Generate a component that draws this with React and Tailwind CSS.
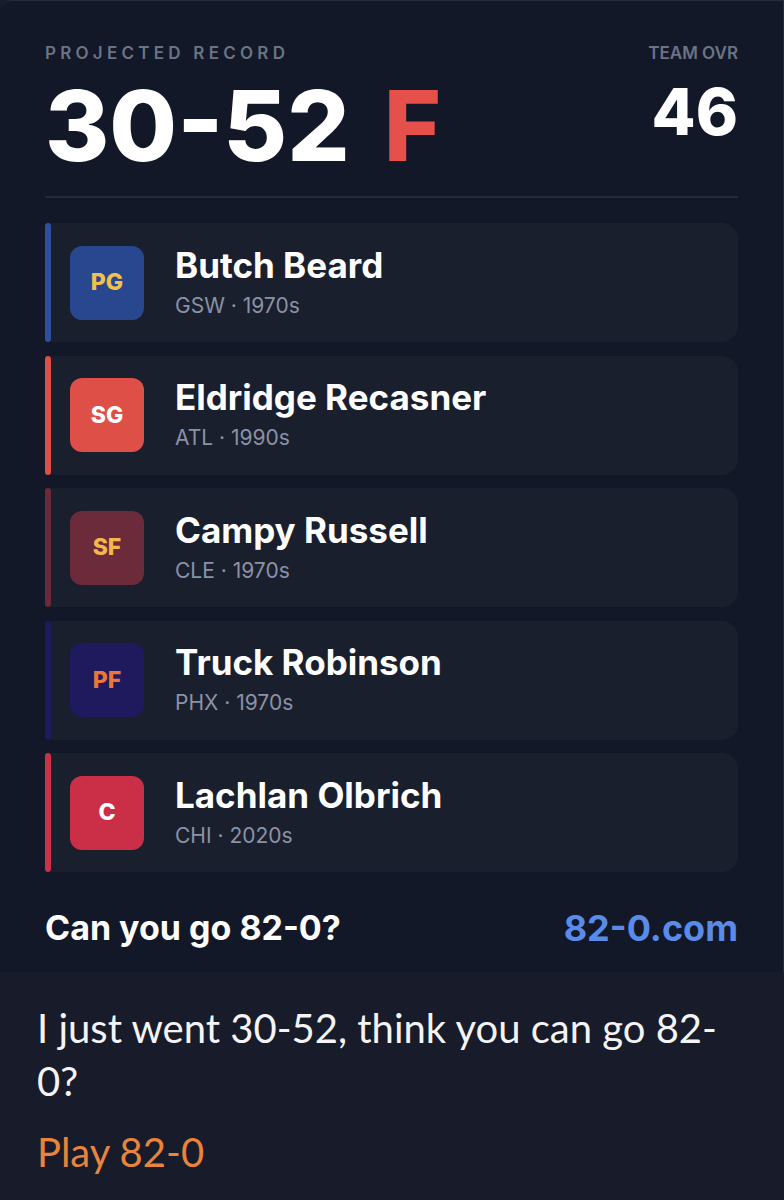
import React from 'react';

const players = [
  { pos: 'PG', name: 'Butch Beard', team: 'GSW', era: '1970s', bar: 'bg-[#2f4f9e]', badge: 'bg-[#28478f]', text: 'text-[#f2c04c]' },
  { pos: 'SG', name: 'Eldridge Recasner', team: 'ATL', era: '1990s', bar: 'bg-[#df4e47]', badge: 'bg-[#de4f48]', text: 'text-white' },
  { pos: 'SF', name: 'Campy Russell', team: 'CLE', era: '1970s', bar: 'bg-[#6a2a3b]', badge: 'bg-[#6c2b3b]', text: 'text-[#f3b84a]' },
  { pos: 'PF', name: 'Truck Robinson', team: 'PHX', era: '1970s', bar: 'bg-[#1e1a5c]', badge: 'bg-[#1f1a5e]', text: 'text-[#e8783a]' },
  { pos: 'C', name: 'Lachlan Olbrich', team: 'CHI', era: '2020s', bar: 'bg-[#cd3048]', badge: 'bg-[#cb2f47]', text: 'text-white' },
];

const PlayerRow = ({ p }) => (
  <div className="flex h-[119px]">
    <div className={`w-[6px] rounded-full ${p.bar}`}></div>
    <div className="flex flex-1 items-center rounded-r-2xl bg-[#1a1f2e] pl-[19px]">
      <div className={`flex h-[74px] w-[74px] items-center justify-center rounded-[12px] text-[23px] font-extrabold ${p.badge} ${p.text}`}>
        {p.pos}
      </div>
      <div className="ml-[31px] flex flex-col">
        <span className="text-[35px] font-bold leading-[36px] text-white">{p.name}</span>
        <span className="mt-[10px] text-[21px] leading-[26px] text-[#8a92a6]">
          {p.team} · {p.era}
        </span>
      </div>
    </div>
  </div>
);

const App = () => {
  return (
    <div className="min-h-[1200px] w-[784px] bg-[#181b29] font-['Inter',sans-serif]">
      {/* Share card */}
      <div className="rounded-tl-xl border-t border-r border-[#262c3b] bg-[#121828] px-[45px] pb-[24px] pt-[41px]">
        <div className="flex justify-between">
          <div>
            <div className="text-[17px] font-semibold uppercase leading-[22px] tracking-[0.25em] text-[#6b7385]">
              Projected Record
            </div>
            <div className="mt-[13px] flex items-baseline text-[98px] font-extrabold leading-none text-white">
              <span>30-52</span>
              <span className="ml-[34px] text-[#e5504a]">F</span>
            </div>
          </div>
          <div className="flex flex-col items-end">
            <div className="text-[17px] font-semibold uppercase leading-[22px] text-[#6b7385]">Team OVR</div>
            <div className="mt-[16px] text-[64px] font-extrabold leading-[64px] text-white">46</div>
          </div>
        </div>

        <div className="mt-[21px] h-[2px] bg-[#232a3a]"></div>

        <div className="mt-[25px] flex flex-col gap-[13.5px]">
          {players.map((p) => (
            <PlayerRow key={p.pos} p={p} />
          ))}
        </div>

        <div className="mt-[36px] flex items-center justify-between">
          <span className="text-[34px] font-bold leading-[40px] text-white">Can you go 82-0?</span>
          <span className="text-[36px] font-bold leading-[40px] text-[#5a8be8]">82-0.com</span>
        </div>
      </div>

      {/* Message preview */}
      <div className="px-[37px] pt-[30px] font-['Lato',sans-serif] text-[40px] leading-[53px]">
        <p className="text-[#f4f4f6]">
          I just went 30-52, think you can go 82-
          <br />
          0?
        </p>
        <p className="mt-[18px] text-[#e8843c]">Play 82-0</p>
      </div>
    </div>
  );
};

export default App;
